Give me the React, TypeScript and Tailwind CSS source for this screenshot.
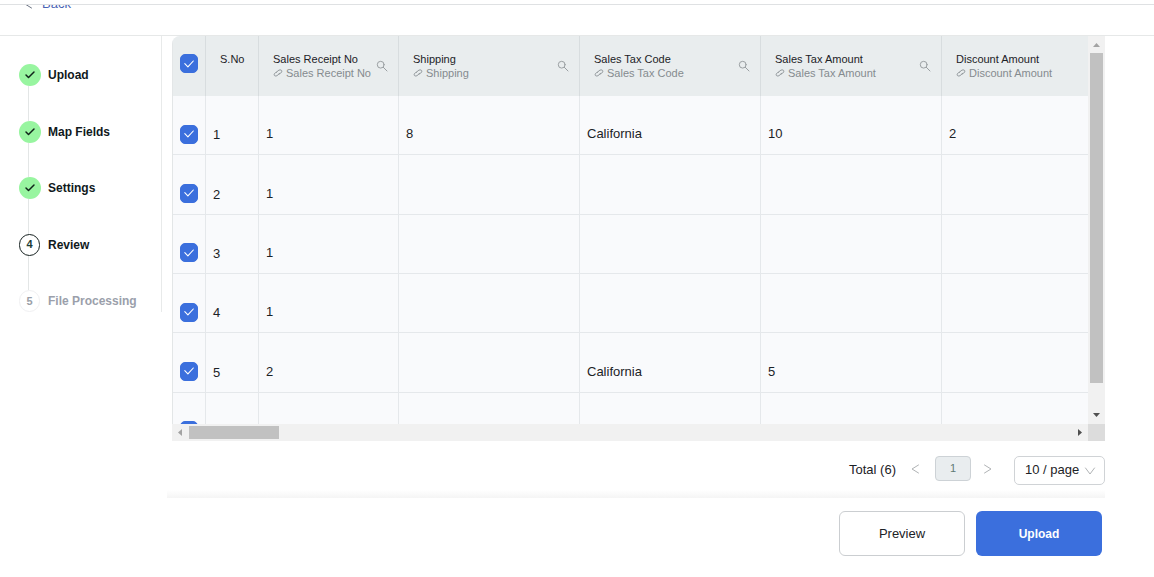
import { useState } from "react";
import clsx from "clsx";
import { Check } from "lucide-react";

type TStep = { id: number; label: string; status: "done" | "current" | "pending" };
type TRow = { id: number; values: string[] };

const steps: TStep[] = [
  { id: 1, label: "Upload", status: "done" },
  { id: 2, label: "Map Fields", status: "done" },
  { id: 3, label: "Settings", status: "done" },
  { id: 4, label: "Review", status: "current" },
  { id: 5, label: "File Processing", status: "pending" },
];

const columns = [
  "Sales Receipt No",
  "Shipping",
  "Sales Tax Code",
  "Sales Tax Amount",
  "Discount Amount",
];

const rows: TRow[] = [
  { id: 1, values: ["1", "8", "California", "10", "2"] },
  { id: 2, values: ["1", "", "", "", ""] },
  { id: 3, values: ["1", "", "", "", ""] },
  { id: 4, values: ["1", "", "", "", ""] },
  { id: 5, values: ["2", "", "California", "5", ""] },
  { id: 6, values: ["", "", "", "", ""] },
];

const LinkIcon = () => (
  <svg
    viewBox="0 0 10 10"
    className="h-[10px] w-[10px] shrink-0"
    fill="none"
    stroke="currentColor"
    strokeWidth={0.9}
    strokeLinecap="round"
  >
    <path d="M3.6 4.2C4.300 3.100 5.800 1.900 7.200 1.900c1.500 0 2 1.200 1.300 2.300C8 5 7.200 5.600 6.400 6" />
    <path d="M6.400 5.300C5.700 6.500 4.200 8 2.700 8 1.200 8 .8 6.800 1.500 5.700 2 4.900 2.800 4.300 3.600 4" />
  </svg>
);

const SearchIcon = () => (
  <svg viewBox="0 0 12 12" className="h-3 w-3" fill="none" stroke="currentColor" strokeLinecap="round">
    <circle cx="4.700" cy="4.700" r="3.400" />
    <path d="m7.300 7.300 3.700 3.700" />
  </svg>
);

const Arrow = ({ path, className }: { path: string; className?: string }) => (
  <svg
    viewBox="0 0 12 12"
    className={clsx("h-3 w-3", className)}
    fill="none"
    stroke="currentColor"
    strokeLinecap="round"
    strokeLinejoin="round"
  >
    <path d={path} />
  </svg>
);

const ARROW_LEFT = "M9.500 2 3 6l6.500 4";
const ARROW_RIGHT = "M2.500 2 9 6l-6.500 4";
const ARROW_DOWN = "M1.500 3 6 9l4.500-6";

const Checkbox = ({
  label,
  checked,
  onChange,
}: {
  label: string;
  checked: boolean;
  onChange: () => void;
}) => (
  <span className="grid h-[19px] w-[18px]">
    <input
      type="checkbox"
      aria-label={label}
      checked={checked}
      onChange={onChange}
      className="peer col-start-1 row-start-1 h-full w-full appearance-none rounded-[5px] border border-gray-300 bg-white checked:border-[#3b6fdd] checked:bg-[#3b6fdd]"
    />
    <svg
      viewBox="0 0 12 12"
      className="pointer-events-none invisible col-start-1 row-start-1 h-3 w-3 place-self-center text-white peer-checked:visible"
      fill="none"
      stroke="currentColor"
      strokeWidth={1.1}
      strokeLinecap="round"
      strokeLinejoin="round"
    >
      <path d="M1.800 5.600 4.900 8.900 10.300 3" />
    </svg>
  </span>
);

const Stepper = () => (
  <aside className="w-[162px] shrink-0 self-start border-r border-[#e8eaea] pl-[19px] pt-7">
    <ol className="flex h-[248px] flex-col">
      {steps.map((step) => (
        <li key={step.id} className="flex flex-1 gap-2 last:flex-none">
          <div className="flex w-[21px] flex-col">
            <span
              className={clsx(
                "flex h-[22px] shrink-0 items-center justify-center rounded-full text-[11px] font-bold",
                step.status === "done" && "w-[22px] bg-[#98f5a0] text-[#10241a]",
                step.status === "current" && "w-[21px] border border-[#15201f] text-[#1d3b35]",
                step.status === "pending" && "w-[21px] border border-[#f0f0f2] text-[#9b9fa8]"
              )}
            >
              {step.status === "done" ? (
                <Check className="h-3 w-3" strokeWidth={3} />
              ) : (
                step.id
              )}
            </span>
            {step.id < steps.length && <span className="ml-[9px] w-px flex-1 bg-[#e3e6e6]" />}
          </div>
          <span
            className={clsx(
              "text-[12px] font-bold leading-[22px]",
              step.status === "pending" ? "text-[#9b9fab]" : "text-[#10191c]"
            )}
          >
            {step.label}
          </span>
        </li>
      ))}
    </ol>
  </aside>
);

const App = () => {
  const [selected, setSelected] = useState<number[]>(rows.map((row) => row.id));
  const allSelected = selected.length === rows.length;

  const toggleRow = (id: number) => {
    setSelected((prev) =>
      prev.includes(id) ? prev.filter((item) => item !== id) : [...prev, id]
    );
  };

  return (
    <div className="min-h-screen bg-white font-['Liberation_Sans',Arial,sans-serif] text-[13px] text-[#1c2226]">
      <div className="h-[5px] border-b border-[#dfe1e3]" />
      <div className="h-[31px] overflow-hidden border-b border-[#e6e8e8] pl-[22px]">
        <a href="#" className="-mt-[9px] flex h-4 items-center gap-2 text-[13px] leading-4 text-[#4a63b4]">
          <Arrow path={ARROW_LEFT} className="text-gray-500" />
          Back
        </a>
      </div>

      <div className="flex">
        <Stepper />

        <main className="min-w-0 flex-1 pl-[10px]">
          <div className="mr-[49px] grid h-[405px] grid-cols-[minmax(0,1fr)_17px] grid-rows-[minmax(0,1fr)_17px] overflow-hidden rounded-tl-lg">
            <div className="overflow-hidden border-l border-[#e3e6e7] bg-[#f9fafc]">
              <table className="h-[416px] w-[950px] table-fixed border-separate border-spacing-0 text-left">
                <colgroup>
                  <col className="w-[33px]" />
                  <col className="w-[53px]" />
                  <col className="w-[140px]" />
                  <col className="w-[181px]" />
                  <col className="w-[181px]" />
                  <col className="w-[181px]" />
                  <col className="w-[181px]" />
                </colgroup>
                <thead>
                  <tr className="h-[60px] bg-[#e9edee] align-top text-[11px] leading-[14px]">
                    <th className="border-r border-[#d8dddf] pl-[7px] pt-[18px] font-normal">
                      <Checkbox
                        label="Select all rows"
                        checked={allSelected}
                        onChange={() => setSelected(allSelected ? [] : rows.map((row) => row.id))}
                      />
                    </th>
                    <th className="border-r border-[#d8dddf] pl-[14px] pt-4 font-normal">S.No</th>
                    {columns.map((column) => (
                      <th key={column} className="border-r border-[#d8dddf] pl-[14px] pr-[10px] pt-4 font-normal">
                        <div className="flex items-center justify-between">
                          <div className="whitespace-nowrap">
                            <p>{column}</p>
                            <p className="flex items-center gap-[3px] text-[#858b8f]">
                              <LinkIcon />
                              {column}
                            </p>
                          </div>
                          <button type="button" aria-label={`Search ${column}`} className="text-[#9a9fa2]">
                            <SearchIcon />
                          </button>
                        </div>
                      </th>
                    ))}
                  </tr>
                </thead>
                <tbody>
                  {rows.map((row) => (
                    <tr key={row.id}>
                      <td className="border-b border-r border-[#e5e8eb] pl-[7px] pt-[18px]">
                        <Checkbox
                          label={`Select row ${row.id}`}
                          checked={selected.includes(row.id)}
                          onChange={() => toggleRow(row.id)}
                        />
                      </td>
                      <td className="border-b border-r border-[#e5e8eb] pl-[7px] pt-5">{row.id}</td>
                      {row.values.map((value, index) => (
                        <td key={index} className="border-b border-r border-[#e5e8eb] pl-[7px] pt-[18px]">
                          {value}
                        </td>
                      ))}
                    </tr>
                  ))}
                </tbody>
              </table>
            </div>

            <div className="flex flex-col items-center bg-[#f1f1f1]">
              <svg viewBox="0 0 17 17" className="h-[17px] w-[17px] fill-[#a3a3a3]">
                <path d="M5 11h7L8.500 7z" />
              </svg>
              <div className="h-[330px] w-[13px] bg-[#c1c1c1]" />
              <svg viewBox="0 0 17 17" className="mt-auto h-[17px] w-[17px] fill-[#505050]">
                <path d="M5 6h7l-3.500 4z" />
              </svg>
            </div>
            <div className="flex items-center bg-[#f1f1f1]">
              <svg viewBox="0 0 17 17" className="h-[17px] w-[17px] fill-[#a3a3a3]">
                <path d="M10 5v7L6 8.500z" />
              </svg>
              <div className="h-[13px] w-[90px] bg-[#c1c1c1]" />
              <svg viewBox="0 0 17 17" className="ml-auto h-[17px] w-[17px] fill-[#505050]">
                <path d="M7 5v7l4-3.500z" />
              </svg>
            </div>
            <div className="bg-[#dcdcdc]" />
          </div>

          <div className="mr-[49px] flex items-start justify-end pb-[13px] pt-[15px]">
            <span className="leading-[27px]">Total (6)</span>
            <button type="button" aria-label="Previous page" className="ml-[13px] flex h-[25px] items-center text-[#b0b3b5]">
              <Arrow path={ARROW_LEFT} />
            </button>
            <button
              type="button"
              className="ml-[14px] h-[25px] w-9 rounded-sm border border-[#cdd2d6] bg-[#e9edef] text-[11px] text-[#5f7a75]"
            >
              1
            </button>
            <button type="button" aria-label="Next page" className="ml-[11px] flex h-[25px] items-center text-[#b0b3b5]">
              <Arrow path={ARROW_RIGHT} />
            </button>
            <div className="ml-5 grid h-[29px] w-[91px] items-center">
              <select
                aria-label="Rows per page"
                defaultValue="10"
                className="col-start-1 row-start-1 h-full w-full appearance-none rounded-[5px] border border-[#d0d3d6] bg-white pb-0.5 pl-[10px]"
              >
                <option value="10">10 / page</option>
                <option value="20">20 / page</option>
                <option value="50">50 / page</option>
              </select>
              <Arrow
                path={ARROW_DOWN}
                className="pointer-events-none col-start-1 row-start-1 mr-[9px] justify-self-end text-[#b0b3b5]"
              />
            </div>
          </div>

          <footer className="-ml-[5px] pr-[52px]">
            <div className="-mr-[3px] -mt-2 h-2 bg-linear-to-b from-white to-[#f5f5f5]" />
            <div className="flex justify-end gap-[11px] pt-[13px]">
              <button type="button" className="h-[45px] w-[126px] rounded-md border border-[#cbced1] bg-white">
                Preview
              </button>
              <button
                type="button"
                className="h-[45px] w-[126px] rounded-md bg-[#3b6fdd] text-[12px] font-bold text-white"
              >
                Upload
              </button>
            </div>
          </footer>
        </main>
      </div>
    </div>
  );
};
export default App;
